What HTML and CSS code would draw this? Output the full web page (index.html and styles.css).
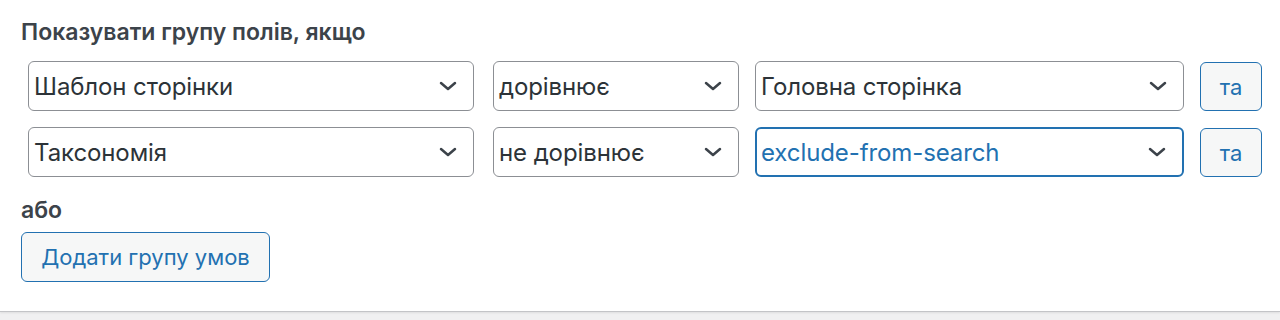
FILE: index.html
```html
<!DOCTYPE html>
<html lang="uk">
<head>
  <meta charset="UTF-8" />
  <meta name="viewport" content="width=device-width, initial-scale=1.0" />
  <title>Умови групи полів</title>
  <link rel="stylesheet" href="styles.css">
</head>
<body>
  <div class="panel">
    <div class="label">Показувати групу полів, якщо</div>
    <div class="rules">
      <div class="select select-param">
        <span class="value">Шаблон сторінки</span>
        <svg class="chevron" viewBox="0 0 18 10"><path d="M2 2l7 6 7-6" /></svg>
      </div>
      <div class="select select-operator">
        <span class="value">дорівнює</span>
        <svg class="chevron" viewBox="0 0 18 10"><path d="M2 2l7 6 7-6" /></svg>
      </div>
      <div class="select select-value">
        <span class="value">Головна сторінка</span>
        <svg class="chevron" viewBox="0 0 18 10"><path d="M2 2l7 6 7-6" /></svg>
      </div>
      <button class="btn btn-and">та</button>

      <div class="select select-param">
        <span class="value">Таксономія</span>
        <svg class="chevron" viewBox="0 0 18 10"><path d="M2 2l7 6 7-6" /></svg>
      </div>
      <div class="select select-operator">
        <span class="value">не дорівнює</span>
        <svg class="chevron" viewBox="0 0 18 10"><path d="M2 2l7 6 7-6" /></svg>
      </div>
      <div class="select select-value focused">
        <span class="value">exclude-from-search</span>
        <svg class="chevron" viewBox="0 0 18 10"><path d="M2 2l7 6 7-6" /></svg>
      </div>
      <button class="btn btn-and">та</button>
    </div>
    <div class="label label-or">або</div>
    <button class="btn btn-group">Додати групу умов</button>
  </div>
  <div class="footer"></div>
</body>
</html>
```

FILE: styles.css
```css
body {
  margin: 0;
  font-family: Inter, 'Noto Sans', sans-serif;
  background: #f0f0f1;
  color: #1d2327;
}
.panel {
  background: #fff;
  padding: 18px 21px 28px;
  height: 265px;
  border-bottom: 1px solid #c3c4c7;
  box-shadow: 0 1px 2px rgba(0, 0, 0, 0.08);
}
.label {
  font-size: 23px;
  font-weight: 600;
  color: #3c434a;
  line-height: 28px;
}
.rules {
  display: grid;
  grid-template-columns: 449px 246px 429px 62px;
  column-gap: 16px;
  row-gap: 16px;
  margin: 15px 0 0 7px;
}
.select {
  display: flex;
  align-items: center;
  justify-content: space-between;
  height: 50px;
  box-sizing: border-box;
  border: 1px solid #8c8f94;
  border-radius: 6px;
  padding: 0 16px 0 5px;
  font-size: 24px;
  color: #2c3338;
  background: #fff;
  letter-spacing: -0.1px;
}
.select-param {
  width: 446px;
}
.select.focused {
  border: 2px solid #2271b1;
  padding-left: 4px;
  color: #2271b1;
}
.chevron {
  width: 18px;
  height: 10px;
  fill: none;
  stroke: #3c434a;
  stroke-width: 2.5;
  stroke-linecap: round;
  stroke-linejoin: round;
}
.btn {
  font-family: inherit;
  font-size: 22px;
  color: #2271b1;
  background: #f6f7f7;
  border: 1px solid #2271b1;
  border-radius: 6px;
  cursor: pointer;
}
.btn-and {
  height: 49px;
  margin-top: 1px;
  padding: 0;
}
.label-or {
  margin-top: 19px;
}
.btn-group {
  margin-top: 8px;
  width: 249px;
  height: 50px;
  padding: 0;
}
.footer {
  height: 8px;
}
```
